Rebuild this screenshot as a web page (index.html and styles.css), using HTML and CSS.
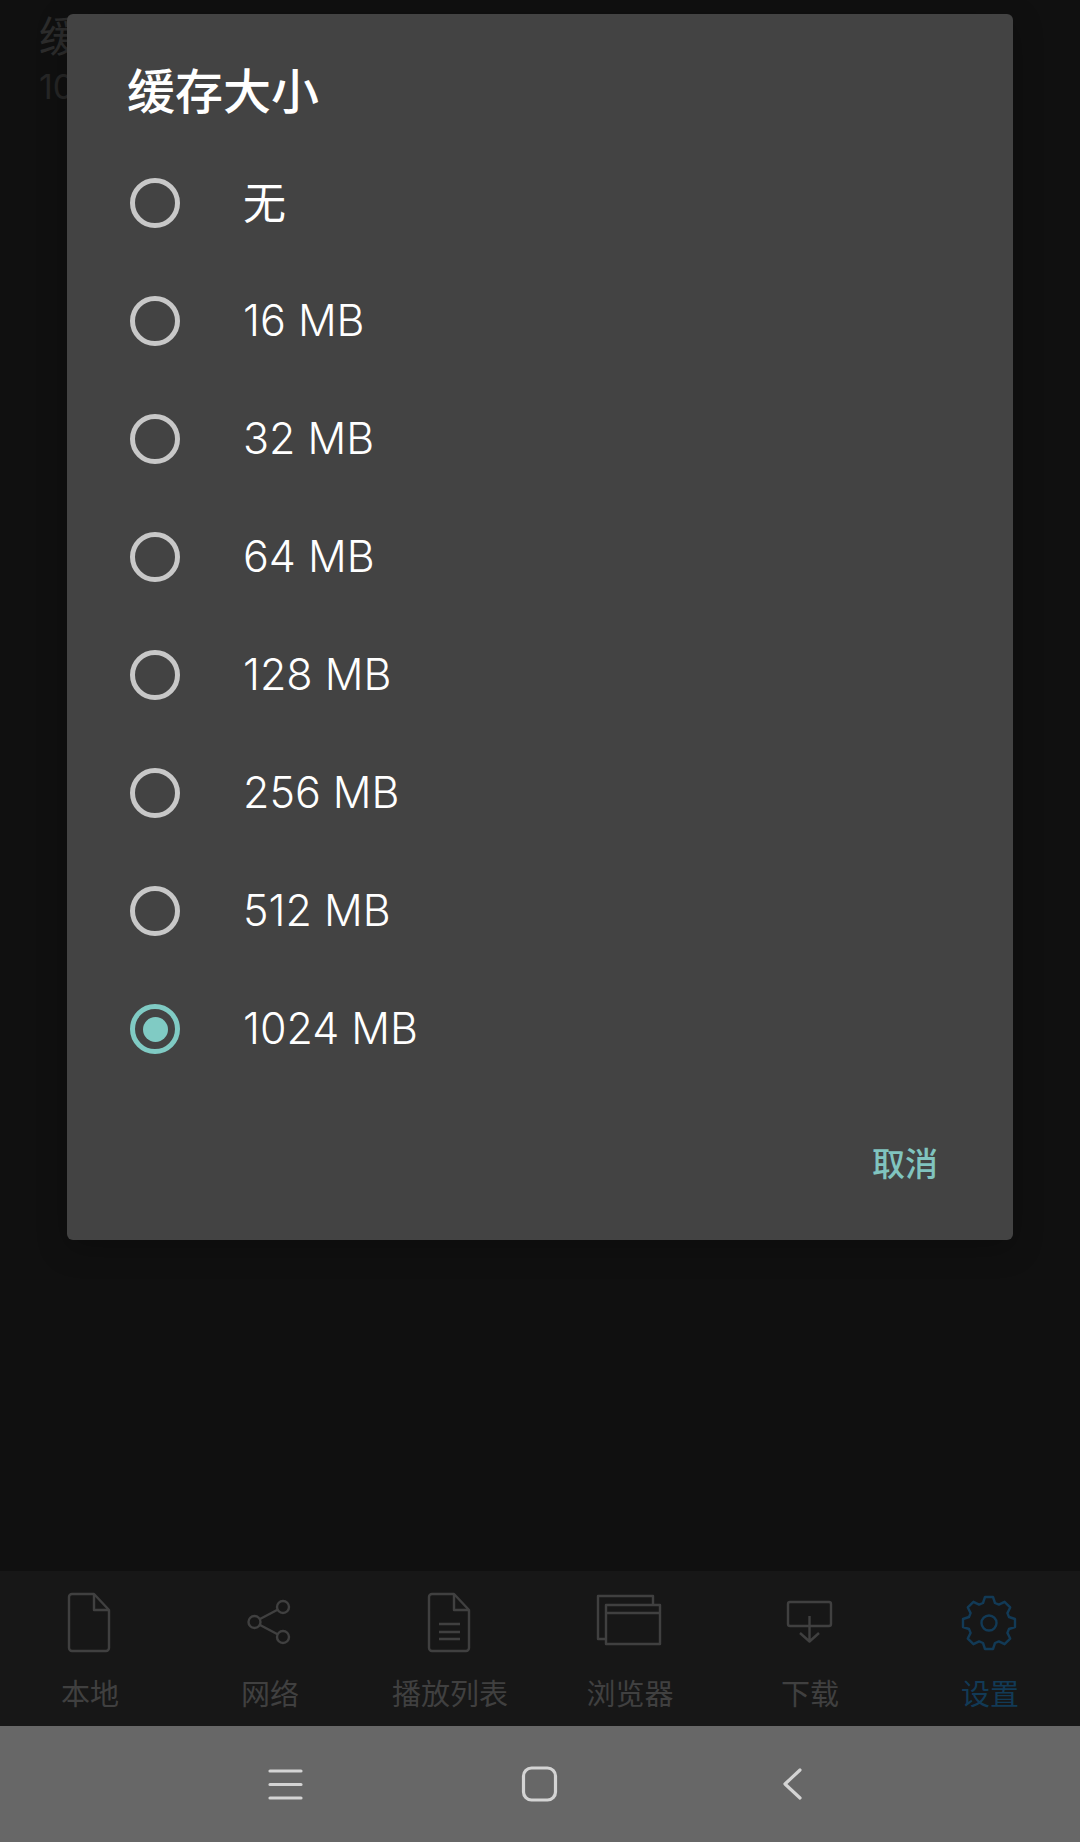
FILE: index.html
```html
<!DOCTYPE html>
<html lang="zh-CN">
<head>
<meta charset="utf-8">
<title>缓存大小</title>
<link rel="stylesheet" href="styles.css">
</head>
<body>
<div class="app">
  <main class="content">
    <div class="setting">
      <div class="setting-title">缓存大小</div>
      <div class="setting-value">1024 MB</div>
    </div>
  </main>
  <nav class="tabs">
    <div class="tab">
      <svg class="tab-icon" viewBox="0 0 100 80"><path d="M32 3h22l15 16v38a3 3 0 0 1-3 3H32a3 3 0 0 1-3-3V6a3 3 0 0 1 3-3z"/><path d="M54 3v16h15"/></svg>
      <span>本地</span>
    </div>
    <div class="tab">
      <svg class="tab-icon" viewBox="0 0 100 80"><circle cx="63" cy="16" r="6"/><circle cx="34.500" cy="31" r="6"/><circle cx="63" cy="46" r="6"/><path d="M40 28l18-9.500M40 34l18 9.500"/></svg>
      <span>网络</span>
    </div>
    <div class="tab">
      <svg class="tab-icon" viewBox="0 0 100 80"><path d="M32 3h22l15 16v38a3 3 0 0 1-3 3H32a3 3 0 0 1-3-3V6a3 3 0 0 1 3-3z"/><path d="M54 3v16h15M39 33h21M39 41h21M39 48h21"/></svg>
      <span>播放列表</span>
    </div>
    <div class="tab">
      <svg class="tab-icon" viewBox="0 0 100 80"><path d="M26 48H18V5h55v9"/><path d="M26 14h54v39H26zM26 22h54"/></svg>
      <span>浏览器</span>
    </div>
    <div class="tab">
      <svg class="tab-icon" viewBox="0 0 100 80"><rect x="28" y="11" width="43" height="24" rx="2"/><path d="M49.500 25v25M40 42l9.500 8.500L59 42"/></svg>
      <span>下载</span>
    </div>
    <div class="tab tab-active">
      <svg class="tab-icon" viewBox="0 0 100 80"><polygon transform="translate(49 32)" points="-6,-20 -4,-26 4,-26 6,-20 9.900,-18.400 15.560,-21.200 21.200,-15.560 18.400,-9.900 20,-6 26,-4 26,4 20,6 18.400,9.900 21.200,15.560 15.560,21.200 9.900,18.400 6,20 4,26 -4,26 -6,20 -9.900,18.400 -15.560,21.200 -21.200,15.560 -18.400,9.900 -20,6 -26,4 -26,-4 -20,-6 -18.400,-9.900 -21.200,-15.560 -15.560,-21.200 -9.900,-18.400"/><circle cx="49" cy="32" r="7.500"/></svg>
      <span>设置</span>
    </div>
  </nav>
  <footer class="sysbar">
    <svg class="sys-icon" viewBox="0 0 40 40"><path d="M4 7h31M4 20.500h31M4 34h31"/></svg>
    <svg class="sys-icon" viewBox="0 0 40 40"><rect x="3.500" y="4" width="32" height="32" rx="8"/></svg>
    <svg class="sys-icon" viewBox="0 0 40 40"><path d="M26 6L11 20l15 14"/></svg>
  </footer>

  <section class="dialog">
    <h1 class="dialog-title">缓存大小</h1>
    <div class="options">
      <div class="option"><span class="radio"></span><span class="cjk">无</span></div>
      <div class="option"><span class="radio"></span><span class="label">16 MB</span></div>
      <div class="option"><span class="radio"></span><span class="label">32 MB</span></div>
      <div class="option"><span class="radio"></span><span class="label">64 MB</span></div>
      <div class="option"><span class="radio"></span><span class="label">128 MB</span></div>
      <div class="option"><span class="radio"></span><span class="label">256 MB</span></div>
      <div class="option"><span class="radio"></span><span class="label">512 MB</span></div>
      <div class="option"><span class="radio radio-on"></span><span class="label">1024 MB</span></div>
    </div>
    <div class="dialog-actions"><span class="cancel">取消</span></div>
  </section>
</div>
</body>
</html>
```
FILE: styles.css
```css
* { box-sizing: border-box; }
html, body { margin: 0; padding: 0; }
body {
  background: #101010;
  font-family: Inter, "Noto Sans CJK SC", sans-serif;
}
.app {
  position: relative;
  width: 1080px;
  height: 1842px;
  display: flex;
  flex-direction: column;
  overflow: hidden;
}
.content {
  flex: 1;
  background: #101010;
  padding: 9px 0 0 39px;
}
.setting-title {
  font-family: "Noto Sans CJK SC", sans-serif;
  font-size: 42px;
  line-height: 50px;
  color: #2c2c2c;
}
.setting-value {
  margin-top: 3px;
  font-size: 34px;
  line-height: 50px;
  color: #262626;
}
.tabs {
  height: 155px;
  background: #171717;
  display: grid;
  grid-template-columns: repeat(6, 180px);
}
.tab {
  display: flex;
  flex-direction: column;
  align-items: center;
  font-family: "Noto Sans CJK SC", sans-serif;
  font-size: 29px;
  line-height: 36px;
  color: #404040;
}
.tab-active { color: #123a56; }
.tab-icon {
  width: 100px;
  height: 80px;
  margin-top: 20px;
  margin-bottom: 3px;
  fill: none;
  stroke: #404040;
  stroke-width: 2.400;
  stroke-linejoin: round;
}
.tab-active .tab-icon { stroke: #123a56; }
.sysbar {
  height: 116px;
  background: #676767;
  display: grid;
  grid-template-columns: repeat(3, 254px);
  justify-content: center;
  justify-items: center;
  align-items: center;
}
.sys-icon {
  width: 40px;
  height: 40px;
  fill: none;
  stroke: #d4d4d4;
  stroke-width: 3.200;
  stroke-linecap: round;
  stroke-linejoin: round;
}
.dialog {
  position: absolute;
  left: 67px;
  top: 14px;
  width: 946px;
  height: 1226px;
  background: #434343;
  border-radius: 6px;
  box-shadow: 0 8px 30px rgba(0, 0, 0, .25);
  color: #fff;
}
.dialog-title {
  margin: 0;
  height: 130px;
  padding: 42px 0 0 60px;
  font-family: "Noto Sans CJK SC", sans-serif;
  font-size: 48px;
  line-height: 64px;
  font-weight: 500;
}
.option {
  height: 118px;
  display: flex;
  align-items: center;
  gap: 63px;
  padding-left: 63px;
  font-size: 43px;
}
.label {
  margin-bottom: 2px;
  font-weight: 350;
}
.cjk {
  font-family: "Noto Sans CJK SC", sans-serif;
  margin-bottom: 7px;
  line-height: 50px;
}
.radio {
  width: 50px;
  height: 50px;
  flex: none;
  border: 5px solid #c8c8c8;
  border-radius: 50%;
  display: flex;
  align-items: center;
  justify-content: center;
}
.radio-on { border-color: #80cbc4; }
.radio-on::after {
  content: "";
  width: 25px;
  height: 25px;
  border-radius: 50%;
  background: #80cbc4;
}
.dialog-actions {
  height: 148px;
  padding-right: 75px;
  display: flex;
  align-items: center;
  justify-content: flex-end;
}
.cancel {
  font-family: "Noto Sans CJK SC", sans-serif;
  font-size: 33px;
  font-weight: 500;
  color: #80c4bf;
}
```
